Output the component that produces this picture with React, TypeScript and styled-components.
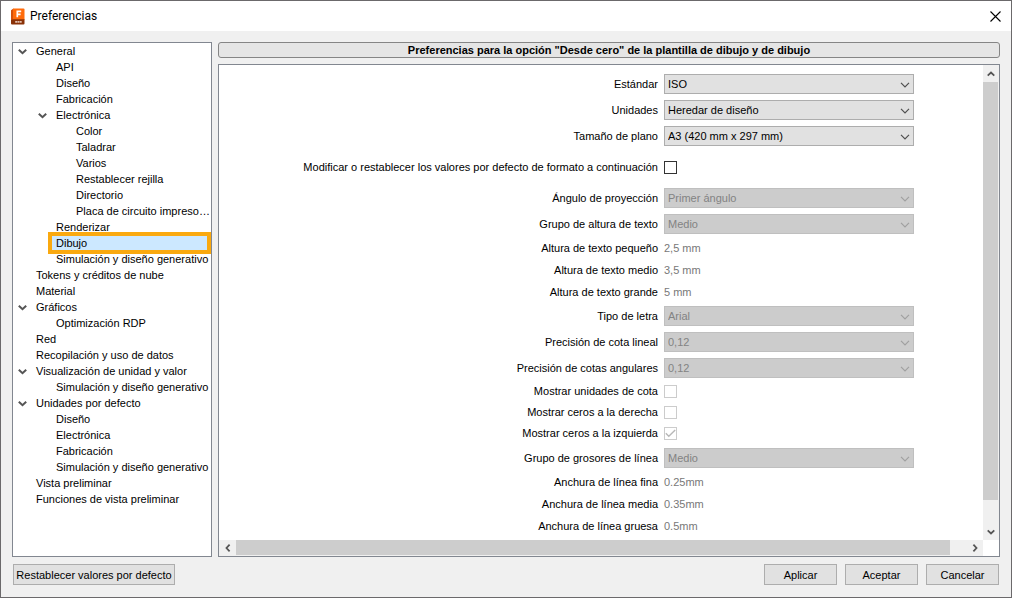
import React, { useState } from "react";
import styled, { createGlobalStyle } from "styled-components";

const GlobalStyle = createGlobalStyle`
  *, *::before, *::after { box-sizing: border-box; }
  body {
    margin: 0;
    background: #f0f0f0;
    color: #000;
    font: 11px/16px "Liberation Sans", Arial, sans-serif;
  }
  button, input, select { font: inherit; color: inherit; margin: 0; }
`;

const Dialog = styled.div`
  display: flex;
  flex-direction: column;
  min-height: 100vh;
  border: 1px solid #6b696b;
  background: #f0f0f0;
`;

const TitleBar = styled.header`
  display: flex;
  align-items: center;
  height: 30px;
  padding: 0 10px 0 9px;
  background: #fff;
`;

const Title = styled.h1`
  flex: 1;
  margin: 0 0 0 5px;
  font: 400 12px/16px Roboto, "Open Sans", sans-serif;
`;

const IconButton = styled.button`
  display: flex;
  align-items: center;
  justify-content: center;
  padding: 0;
  border: 0;
  background: none;
`;

const Content = styled.main`
  flex: 1;
  display: grid;
  grid-template-columns: 200px minmax(0, 1fr);
  gap: 6px;
  padding: 11px 11px 7px;
`;

const TreePane = styled.nav`
  border: 1px solid #828790;
  background: #fff;
  overflow: hidden;
`;

const TreeList = styled.ul`
  margin: 0;
  padding: 0;
  list-style: none;
`;

const TreeRow = styled.div<{ $level: number }>`
  display: flex;
  height: 16px;
  padding-left: ${({ $level }) => $level * 20}px;
`;

const ToggleSlot = styled.span`
  display: flex;
  flex: none;
  width: 19px;
  justify-content: center;
`;

const TreeLabel = styled.button<{ $selected: boolean }>`
  position: relative;
  flex: 1;
  min-width: 0;
  padding: 0 0 0 4px;
  border: 0;
  text-align: left;
  white-space: nowrap;
  background: ${({ $selected }) => ($selected ? "#cce8ff" : "none")};
  z-index: ${({ $selected }) => ($selected ? 1 : 0)};
`;

const Highlight = styled.span`
  position: absolute;
  inset: -3px 0 -3px -4px;
  border: 4px solid #faa90f;
  pointer-events: none;
`;

const Details = styled.section`
  display: flex;
  flex-direction: column;
  gap: 6px;
`;

const Banner = styled.h2`
  height: 16px;
  margin: 0;
  border: 1px solid #858585;
  border-radius: 3px;
  background: #e5e5e5;
  font-size: 11px;
  line-height: 14px;
  font-weight: 700;
  text-align: center;
`;

const ScrollFrame = styled.div`
  flex: 1;
  display: grid;
  grid-template-columns: minmax(0, 1fr) 16px;
  grid-template-rows: minmax(0, 1fr) 16px;
  border: 1px solid #828790;
  background: #fff;
`;

const Form = styled.form`
  display: flex;
  flex-direction: column;
  gap: 6px;
  padding: 9px 69px 4px 0;
`;

const FieldRow = styled.div<{ $spaced?: boolean }>`
  display: grid;
  grid-template-columns: minmax(0, 1fr) 250px;
  column-gap: 6px;
  align-items: center;
  margin: ${({ $spaced }) => ($spaced ? "7px 0" : "0")};
`;

const FieldLabel = styled.label`
  text-align: right;
  white-space: nowrap;
`;

const FieldValue = styled.output`
  color: #787878;
`;

const CheckGroup = styled.div`
  display: flex;
  flex-direction: column;
  gap: 6px;
  padding-bottom: 1px;
  line-height: 15px;
`;

const SelectBox = styled.div`
  position: relative;
  display: flex;
`;

const Select = styled.select`
  appearance: none;
  width: 100%;
  height: 20px;
  padding: 0 20px 0 3px;
  border: 1px solid #adadad;
  border-radius: 0;
  background: #e1e1e1;
  &:disabled {
    border-color: #bfbfbf;
    background: #cccccc;
    color: #838383;
    opacity: 1;
  }
`;

const SelectArrow = styled.svg<{ $disabled?: boolean }>`
  position: absolute;
  right: 4px;
  top: 8px;
  stroke: ${({ $disabled }) => ($disabled ? "#a0a0a0" : "#505050")};
  pointer-events: none;
`;

const CheckBox = styled.span`
  position: relative;
  display: flex;
  width: 13px;
  height: 13px;
`;

const CheckInput = styled.input`
  appearance: none;
  width: 13px;
  height: 13px;
  border: 1px solid #333;
  background: #fff;
  &:disabled { border-color: #ccc; }
`;

const CheckMark = styled.svg`
  position: absolute;
  inset: 0;
  pointer-events: none;
`;

const ScrollBar = styled.div<{ $vertical?: boolean }>`
  display: flex;
  flex-direction: ${({ $vertical }) => ($vertical ? "column" : "row")};
  padding: ${({ $vertical }) => ($vertical ? "0 1px 0 0" : "0 0 1px 0")};
  background: #f0f0f0;
  ${IconButton} { flex: 0 0 17px; }
`;

const ScrollTrack = styled.div<{ $vertical?: boolean }>`
  flex: 1;
  display: flex;
  flex-direction: ${({ $vertical }) => ($vertical ? "column" : "row")};
  padding: ${({ $vertical }) => ($vertical ? "0 0 23px" : "0 16px 0 0")};
`;

const ScrollThumb = styled.div`
  flex: 1;
  background: #cdcdcd;
`;

const Footer = styled.footer`
  display: flex;
  gap: 8px;
  padding: 0 12px 12px;
`;

const PushButton = styled.button<{ $wide?: boolean }>`
  width: ${({ $wide }) => ($wide ? 162 : 73)}px;
  height: 21px;
  margin-right: ${({ $wide }) => ($wide ? "auto" : 0)};
  padding: 0;
  border: 1px solid #adadad;
  background: #e1e1e1;
  white-space: nowrap;
`;

type Direction = "up" | "down" | "left" | "right";
const angles: Record<Direction, number> = { down: 0, left: 90, up: 180, right: 270 };

const BoldChevron = ({ direction, size = 9 }: { direction: Direction; size?: number }) => (
  <svg width={size} height={size} viewBox="0 0 9 9" aria-hidden="true">
    <path
      d="M.8 2.7 4.5 6.2 8.2 2.7"
      fill="none"
      stroke="#555"
      strokeWidth="2"
      transform={`rotate(${angles[direction]} 4.5 4.5)`}
    />
  </svg>
);

const AppIcon = () => (
  <svg width="15" height="17" viewBox="0 0 15 17" aria-hidden="true">
    <path d="M1 2.2 3.4.5V12L1 13Z" fill="#d3500a" />
    <path d="M3 .5H13.5Q14.5.5 14.5 1.5V12H3Z" fill="#ff6b0b" />
    <path d="M1 12 3.4 11.2H14.5V15.5Q14.5 16.5 13.5 16.5H2Q1 16.5 1 15.5Z" fill="#8a3208" />
    <path d="M7.3 9.3V3.3H11.2M7.3 6.3H10.6" fill="none" stroke="#fff" strokeWidth="1.7" />
    <path d="M5.2 13.8H11.8" stroke="#e2c0ae" strokeWidth="1.8" strokeDasharray="1.9 .4" />
  </svg>
);

type Node = { label: string; children?: Node[] };

const tree: Node[] = [
  {
    label: "General",
    children: [
      { label: "API" },
      { label: "Diseño" },
      { label: "Fabricación" },
      {
        label: "Electrónica",
        children: [
          { label: "Color" },
          { label: "Taladrar" },
          { label: "Varios" },
          { label: "Restablecer rejilla" },
          { label: "Directorio" },
          { label: "Placa de circuito impreso…" },
        ],
      },
      { label: "Renderizar" },
      { label: "Dibujo" },
      { label: "Simulación y diseño generativo" },
    ],
  },
  { label: "Tokens y créditos de nube" },
  { label: "Material" },
  { label: "Gráficos", children: [{ label: "Optimización RDP" }] },
  { label: "Red" },
  { label: "Recopilación y uso de datos" },
  {
    label: "Visualización de unidad y valor",
    children: [{ label: "Simulación y diseño generativo" }],
  },
  {
    label: "Unidades por defecto",
    children: [
      { label: "Diseño" },
      { label: "Electrónica" },
      { label: "Fabricación" },
      { label: "Simulación y diseño generativo" },
    ],
  },
  { label: "Vista preliminar" },
  { label: "Funciones de vista preliminar" },
];

type BranchProps = { node: Node; level: number; selected: string; onSelect: (s: string) => void };

const Branch = ({ node, level, selected, onSelect }: BranchProps) => {
  const [open, setOpen] = useState(true);
  const isSelected = node.label === selected;
  return (
    <li>
      <TreeRow $level={level}>
        <ToggleSlot>
          {node.children && (
            <IconButton
              type="button"
              aria-label={node.label}
              aria-expanded={open}
              onClick={() => setOpen(!open)}
            >
              <BoldChevron direction={open ? "down" : "right"} />
            </IconButton>
          )}
        </ToggleSlot>
        <TreeLabel type="button" $selected={isSelected} onClick={() => onSelect(node.label)}>
          {node.label}
          {isSelected && <Highlight />}
        </TreeLabel>
      </TreeRow>
      {node.children && open && (
        <TreeList>
          {node.children.map((child) => (
            <Branch
              key={child.label}
              node={child}
              level={level + 1}
              selected={selected}
              onSelect={onSelect}
            />
          ))}
        </TreeList>
      )}
    </li>
  );
};

type FieldProps = { id: string; label: string };

const SelectField = ({ id, label, value, disabled }: FieldProps & { value: string; disabled?: boolean }) => (
  <FieldRow>
    <FieldLabel htmlFor={id}>{label}</FieldLabel>
    <SelectBox>
      <Select id={id} disabled={disabled} defaultValue={value}>
        <option>{value}</option>
      </Select>
      <SelectArrow $disabled={disabled} width="10" height="6" viewBox="0 0 10 6" fill="none" aria-hidden="true">
        <path d="M1 .8 5 4.8 9 .8" strokeWidth="1.2" />
      </SelectArrow>
    </SelectBox>
  </FieldRow>
);

const ValueField = ({ id, label, value }: FieldProps & { value: string }) => (
  <FieldRow>
    <FieldLabel htmlFor={id}>{label}</FieldLabel>
    <FieldValue id={id}>{value}</FieldValue>
  </FieldRow>
);

type CheckProps = FieldProps & { checked?: boolean; disabled?: boolean; spaced?: boolean };

const CheckField = ({ id, label, checked = false, disabled, spaced }: CheckProps) => {
  const [on, setOn] = useState(checked);
  return (
    <FieldRow $spaced={spaced}>
      <FieldLabel htmlFor={id}>{label}</FieldLabel>
      <CheckBox>
        <CheckInput
          id={id}
          type="checkbox"
          checked={on}
          disabled={disabled}
          onChange={() => setOn(!on)}
        />
        {on && (
          <CheckMark width="13" height="13" viewBox="0 0 13 13" aria-hidden="true">
            <path
              d="M1.8 6.3 4.8 9.3 11.2 2.9"
              fill="none"
              stroke={disabled ? "#b8b8b8" : "#333"}
              strokeWidth="1.4"
            />
          </CheckMark>
        )}
      </CheckBox>
    </FieldRow>
  );
};

export default function App() {
  const [selected, setSelected] = useState("Dibujo");
  return (
    <>
      <GlobalStyle />
      <Dialog>
        <TitleBar>
          <AppIcon />
          <Title>Preferencias</Title>
          <IconButton type="button" aria-label="Cerrar">
            <svg width="11" height="11" viewBox="0 0 11 11" aria-hidden="true">
              <path d="M.5.5 10.5 10.5M10.5.5.5 10.5" stroke="#000" strokeWidth="1.1" />
            </svg>
          </IconButton>
        </TitleBar>
        <Content>
          <TreePane>
            <TreeList>
              {tree.map((node) => (
                <Branch
                  key={node.label}
                  node={node}
                  level={0}
                  selected={selected}
                  onSelect={setSelected}
                />
              ))}
            </TreeList>
          </TreePane>
          <Details>
            <Banner>
              Preferencias para la opción "Desde cero" de la plantilla de dibujo y de dibujo
            </Banner>
            <ScrollFrame>
              <Form>
                <SelectField id="standard" label="Estándar" value="ISO" />
                <SelectField id="units" label="Unidades" value="Heredar de diseño" />
                <SelectField id="sheet" label="Tamaño de plano" value="A3 (420 mm x 297 mm)" />
                <CheckField
                  id="override"
                  label="Modificar o restablecer los valores por defecto de formato a continuación"
                  spaced
                />
                <SelectField id="angle" label="Ángulo de proyección" value="Primer ángulo" disabled />
                <SelectField id="text-group" label="Grupo de altura de texto" value="Medio" disabled />
                <ValueField id="text-small" label="Altura de texto pequeño" value="2,5 mm" />
                <ValueField id="text-medium" label="Altura de texto medio" value="3,5 mm" />
                <ValueField id="text-large" label="Altura de texto grande" value="5 mm" />
                <SelectField id="font" label="Tipo de letra" value="Arial" disabled />
                <SelectField id="linear" label="Precisión de cota lineal" value="0,12" disabled />
                <SelectField id="angular" label="Precisión de cotas angulares" value="0,12" disabled />
                <CheckGroup>
                  <CheckField id="show-units" label="Mostrar unidades de cota" disabled />
                  <CheckField id="trailing" label="Mostrar ceros a la derecha" disabled />
                  <CheckField id="leading" label="Mostrar ceros a la izquierda" checked disabled />
                </CheckGroup>
                <SelectField id="line-group" label="Grupo de grosores de línea" value="Medio" disabled />
                <ValueField id="line-thin" label="Anchura de línea fina" value="0.25mm" />
                <ValueField id="line-medium" label="Anchura de línea media" value="0.35mm" />
                <ValueField id="line-thick" label="Anchura de línea gruesa" value="0.5mm" />
              </Form>
              <ScrollBar $vertical>
                <IconButton type="button" aria-label="Subir">
                  <BoldChevron direction="up" size={8} />
                </IconButton>
                <ScrollTrack $vertical>
                  <ScrollThumb />
                </ScrollTrack>
                <IconButton type="button" aria-label="Bajar">
                  <BoldChevron direction="down" size={8} />
                </IconButton>
              </ScrollBar>
              <ScrollBar>
                <IconButton type="button" aria-label="Izquierda">
                  <BoldChevron direction="left" size={8} />
                </IconButton>
                <ScrollTrack>
                  <ScrollThumb />
                </ScrollTrack>
                <IconButton type="button" aria-label="Derecha">
                  <BoldChevron direction="right" size={8} />
                </IconButton>
              </ScrollBar>
            </ScrollFrame>
          </Details>
        </Content>
        <Footer>
          <PushButton type="button" $wide>
            Restablecer valores por defecto
          </PushButton>
          <PushButton type="button">Aplicar</PushButton>
          <PushButton type="button">Aceptar</PushButton>
          <PushButton type="button">Cancelar</PushButton>
        </Footer>
      </Dialog>
    </>
  );
}
